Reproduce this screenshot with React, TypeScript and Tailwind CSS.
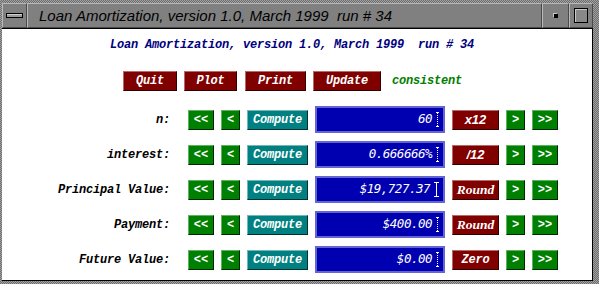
import React from 'react'

const mono = "font-['Liberation_Mono','Courier_New',monospace] text-[12px] tracking-[-0.2px] font-bold italic"
const sansBI = "font-['Liberation_Sans',Arial,sans-serif] text-[13px] font-bold italic"
const serifBI = "font-['Liberation_Serif','Times_New_Roman',serif] text-[13.5px] font-bold italic"
const arrow = "font-['Liberation_Mono','Courier_New',monospace] text-[12px] font-bold"

const tone = {
  green: 'bg-[#008000] border-t-[#62b062] border-l-[#62b062] border-b-[#002800] border-r-[#002800]',
  teal: 'bg-[#008080] border-t-[#72b6b6] border-l-[#72b6b6] border-b-[#003030] border-r-[#003030]',
  red: 'bg-[#800000] border-t-[#b46a6a] border-l-[#b46a6a] border-b-[#300000] border-r-[#300000]',
}

type Kind = keyof typeof tone

const Btn: React.FC<{ label: string; w: string; kind: Kind; font?: string; extra?: string }> = ({
  label,
  w,
  kind,
  font = mono,
  extra = '',
}) => (
  <div className={`flex h-[20px] ${w} items-center justify-center border ${tone[kind]} leading-none text-white ${font} ${extra}`}>
    {label}
  </div>
)

const Cursor: React.FC<{ focus?: boolean }> = ({ focus }) =>
  focus ? (
    <div className="flex h-[15px] w-[5px] flex-col items-center">
      <div className="h-px w-[5px] bg-white" />
      <div className="w-px flex-1 bg-white" />
      <div className="h-px w-[5px] bg-white" />
    </div>
  ) : (
    <div className="flex h-[15px] w-[3px] flex-col items-center">
      <div className="h-px w-[3px] bg-white" />
      <div className="flex-1 border-l border-dotted border-white" />
      <div className="h-px w-[3px] bg-white" />
    </div>
  )

const rows = [
  { label: 'n:', value: '60', op: 'x12', opFont: sansBI },
  { label: 'interest:', value: '0.666666%', op: '/12', opFont: sansBI },
  { label: 'Principal Value:', value: '$19,727.37', op: 'Round', opFont: serifBI, focus: true },
  { label: 'Payment:', value: '$400.00', op: 'Round', opFont: serifBI },
  { label: 'Future Value:', value: '$0.00', op: 'Zero', opFont: mono },
]

const bevel = 'border-t border-l border-t-[#b9b9b9] border-l-[#b9b9b9] border-b border-r border-b-[#4a4a4a] border-r-[#4a4a4a]'

export default function App() {
  return (
    <div className="flex h-[284px] w-[599px] flex-col bg-[#8c8c8c] bg-[image:repeating-conic-gradient(#6c6c6c_0%_25%,#a2a2a2_0%_50%)] bg-[length:2px_2px] pb-[3px] pl-[2px] pr-[6px] pt-[3px]">
      {/* title bar */}
      <div className="flex h-[25px] bg-[#808080]">
        <div className={`flex w-[25px] items-center justify-center ${bevel}`}>
          <div className="h-[5px] w-[17px] border border-black bg-[#9a9a9a] shadow-[inset_0_1px_0_#d0d0d0]" />
        </div>
        <div className={`flex flex-1 items-center pl-[11px] ${bevel}`}>
          <span className="whitespace-pre font-['Liberation_Sans',Arial,sans-serif] text-[15px] italic leading-none text-black">
            Loan Amortization, version 1.0, March 1999  run # 34
          </span>
        </div>
        <div className={`flex w-[27px] items-center justify-center ${bevel}`}>
          <div className="h-[4px] w-[4px] bg-black shadow-[-1px_-1px_0_#c8c8c8]" />
        </div>
        <div className={`flex w-[24px] items-center justify-center ${bevel}`}>
          <div className="h-[15px] w-[14px] border border-black bg-[#888] shadow-[inset_1px_1px_0_#c8c8c8]" />
        </div>
      </div>
      <div className="h-px bg-black" />

      {/* content */}
      <div className="flex flex-1 flex-col border-b border-r border-black bg-white pt-[9px]">
        <div className={`whitespace-pre pl-[108px] leading-[14px] text-[#000080] ${mono}`}>
          Loan Amortization, version 1.0, March 1999  run # 34
        </div>

        <div className="mt-[19px] flex items-center gap-[7px] pl-[121px]">
          <Btn label="Quit" w="w-[54px]" kind="red" />
          <Btn label="Plot" w="w-[53px]" kind="red" />
          <Btn label="Print" w="w-[61px]" kind="red" extra="ml-[1px]" />
          <Btn label="Update" w="w-[68px]" kind="red" />
          <span className={`ml-[4px] text-[#008000] ${mono}`}>consistent</span>
        </div>

        <div className="mt-[15px] flex flex-col gap-[8px]">
          {rows.map((r) => (
            <div key={r.label} className="flex h-[27px] items-center">
              <div className={`w-[168px] whitespace-pre text-right text-black ${mono}`}>{r.label}</div>
              <div className="ml-[18px] flex items-center gap-[7px]">
                <Btn label="<<" w="w-[26px]" kind="green" font={arrow} />
                <Btn label="<" w="w-[19px]" kind="green" font={arrow} />
                <Btn label="Compute" w="w-[61px]" kind="teal" />
                <div className="flex h-[27px] w-[130px] items-center justify-end border-2 border-[#6464d2] bg-[#0000b0] pr-[4px]">
                  <span className="font-['DejaVu_Sans_Mono',monospace] text-[12.5px] tracking-[-0.5px] italic leading-none text-white">
                    {r.value}
                  </span>
                  <div className="ml-[4px]">
                    <Cursor focus={r.focus} />
                  </div>
                </div>
                <Btn label={r.op} w="w-[47px]" kind="red" font={r.opFont} />
                <Btn label=">" w="w-[19px]" kind="green" font={arrow} />
                <Btn label=">>" w="w-[26px]" kind="green" font={arrow} />
              </div>
            </div>
          ))}
        </div>
      </div>
    </div>
  )
}
